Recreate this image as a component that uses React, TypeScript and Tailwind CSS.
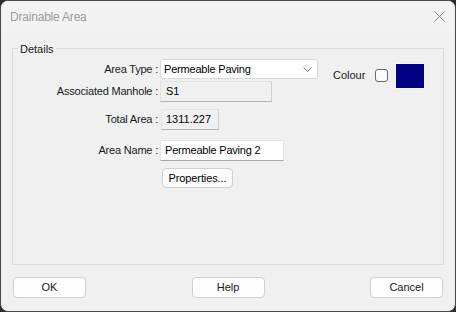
import { FC, ReactNode } from "react";

const font = { fontFamily: '"Liberation Sans", Arial, sans-serif' };

const Row: FC<{ label: string; className: string; children: ReactNode }> = ({ label, className, children }) => (
	<div className={`flex items-center ${className}`}>
		<div className="w-[145px] shrink-0 text-right tracking-[-0.2px] text-[#1a1a1a]">{label}</div>
		{children}
	</div>
);

const DialogButton: FC<{ children: ReactNode }> = ({ children }) => (
	<button className="flex h-[21px] w-[73px] items-center justify-center rounded-[4px] border border-[#d0d0d0] bg-[#fdfdfd] text-[11px] text-[#1a1a1a]">
		{children}
	</button>
);

export default function App() {
	return (
		<div className="h-[312px] w-[456px] bg-[#2a2a2a]" style={font}>
			<div className="flex h-full w-full flex-col overflow-hidden rounded-[8px] border border-[#474747] bg-[#f0f0f0] text-[11px]">
				{/* title bar */}
				<div className="flex h-[31px] shrink-0 items-center justify-between bg-[#f3f3f3] pl-[9px] pr-[10px]">
					<span className="text-[12px] tracking-[-0.2px] text-[#9b9b9b]">Drainable Area</span>
					<svg width={11} height={11} viewBox="0 0 11 11" stroke="#8a8a8a" strokeWidth={1}>
						<line x1={0.5} y1={0.5} x2={10.5} y2={10.5} />
						<line x1={10.5} y1={0.5} x2={0.5} y2={10.5} />
					</svg>
				</div>

				{/* group box */}
				<div className="relative mx-[11px] mt-[16px] h-[217px] border border-[#dadada]">
					<span className="absolute -top-[8px] left-[5px] bg-[#f0f0f0] px-[2px] text-[11px] leading-[16px] text-[#1a1a1a]">
						Details
					</span>
					<div className="flex pt-[10px]">
						<div className="flex w-[306px] flex-col">
							<Row label="Area Type :" className="">
								<div className="ml-[2px] flex h-[20px] w-[158px] items-center justify-between rounded-[3px] border border-[#d9d9d9] bg-white pl-[3px] pr-[5px]">
									<span className="tracking-[-0.2px]">Permeable Paving</span>
									<svg width={9} height={5} viewBox="0 0 9 5" fill="none" stroke="#6a6a6a" strokeWidth={1}>
										<polyline points="0.5,0.5 4.5,4.5 8.5,0.5" />
									</svg>
								</div>
							</Row>
							<Row label="Associated Manhole :" className="mt-[2px]">
								<div className="ml-[2px] flex h-[21px] w-[112px] items-center border border-[#e2e2e2] border-b-[#b4b4b4] border-r-[#d0d0d0] bg-[#f0f0f0] pl-[5px]">
									S1
								</div>
							</Row>
							<Row label="Total Area :" className="mt-[7px]">
								<div className="ml-[3px] flex h-[21px] w-[58px] items-center border border-[#e2e2e2] border-b-[#b4b4b4] border-r-[#d0d0d0] bg-[#f0f0f0] pl-[4px]">
									1311.227
								</div>
							</Row>
							<Row label="Area Name :" className="mt-[10px]">
								<div className="ml-[2px] flex h-[21px] w-[124px] items-center border border-[#e5e5e5] border-b-[#a8a8a8] bg-white pl-[4px] tracking-[-0.2px]">
									Permeable Paving 2
								</div>
							</Row>
							<div className="ml-[149px] mt-[7px] flex h-[20px] w-[71px] items-center justify-center rounded-[4px] border border-[#d0d0d0] bg-[#fbfbfb] tracking-[-0.1px]">
								Properties...
							</div>
						</div>
						<div className="ml-[14px] mt-[4px] flex h-[25px] items-center">
							<span className="text-[#1a1a1a]">Colour</span>
							<div className="ml-[10px] h-[13px] w-[13px] rounded-[3px] border border-[#6b6b6b] bg-[#fbfbfb]" />
							<div className="ml-[7px] h-[26px] w-[30px] border border-[#f7f7f7] bg-[#000080]" />
						</div>
					</div>
				</div>

				{/* buttons */}
				<div className="mt-[12px] flex justify-between px-[12px]">
					<DialogButton>OK</DialogButton>
					<DialogButton>Help</DialogButton>
					<DialogButton>Cancel</DialogButton>
				</div>
			</div>
		</div>
	);
}
